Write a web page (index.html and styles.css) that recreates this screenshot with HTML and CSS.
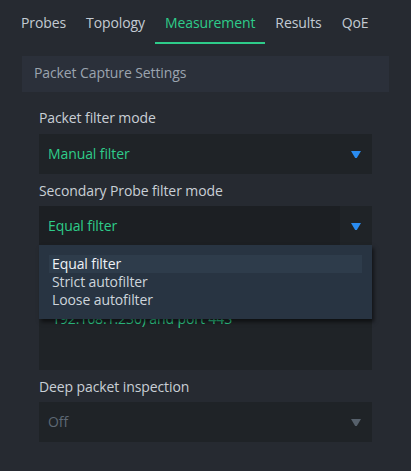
FILE: index.html
```html
<!DOCTYPE html>
<html>
<head>
<meta charset="utf-8">
<link rel="stylesheet" href="styles.css">
</head>
<body>
<nav class="tabs">
  <div class="tab">Probes</div>
  <div class="tab">Topology</div>
  <div class="tab active">Measurement</div>
  <div class="tab">Results</div>
  <div class="tab">QoE</div>
</nav>
<section class="panel">
  <div class="panel-head">Packet Capture Settings</div>
  <div class="panel-body">
    <div class="field">
      <div class="label">Packet filter mode</div>
      <div class="select">
        <span class="value">Manual filter</span>
        <span class="arrow"><svg width="10" height="7" viewBox="0 0 10 7"><polygon points="0,0 10,0 5.8,7 4.2,7" fill="#2a8cf0"/></svg></span>
      </div>
    </div>
    <div class="field">
      <div class="label">Secondary Probe filter mode</div>
      <div class="select-wrap">
        <div class="select open">
          <span class="value input">Equal filter</span>
          <span class="arrow"><svg width="10" height="7" viewBox="0 0 10 7"><polygon points="0,0 10,0 5.8,7 4.2,7" fill="#2a8cf0"/></svg></span>
        </div>
        <ul class="menu">
          <li class="item selected">Equal filter</li>
          <li class="item">Strict autofilter</li>
          <li class="item">Loose autofilter</li>
        </ul>
      </div>
    </div>
    <div class="field field-filter">
      <div class="textarea">192.168.1.230) and port 443</div>
    </div>
    <div class="field">
      <div class="label">Deep packet inspection</div>
      <div class="select disabled">
        <span class="value">Off</span>
        <span class="arrow"><svg width="10" height="7" viewBox="0 0 10 7"><polygon points="0,0 10,0 5.8,7 4.2,7" fill="#56606b"/></svg></span>
      </div>
    </div>
  </div>
</section>
</body>
</html>
```

FILE: styles.css
```css
* { box-sizing: border-box; }
html, body { margin: 0; padding: 0; }
body {
  background: #262a31;
  font-family: "Open Sans", "Noto Sans", sans-serif;
  font-size: 14px;
  line-height: 20px;
  letter-spacing: -0.1px;
  color: #c6ccd4;
  width: 411px;
  height: 471px;
  overflow: hidden;
}
.tabs {
  display: flex;
  padding-left: 11px;
}
.tab {
  padding: 13px 10px 9px;
  border-bottom: 2px solid transparent;
  color: #c3cad3;
}
.tab.active {
  color: #2ecc8a;
  border-bottom-color: #2ecc8a;
}
.panel {
  margin: 12px 22px 0;
}
.panel-head {
  background: #2b303a;
  color: #9ba4af;
  padding: 7px 12px 9px;
  height: 36px;
}
.panel-body {
  padding: 9px 17px 0;
}
.field {
  margin-top: 7px;
}
.label {
  color: #c9cfd6;
  margin-bottom: 5px;
}
.field:first-child .label { margin-bottom: 6px; }
.select {
  display: flex;
  height: 40px;
  background: #1f2327;
  align-items: stretch;
}
.select .value {
  flex: 1;
  padding-left: 9px;
  line-height: 40px;
  color: #2ecc8a;
}
.select .value.input {
  background: #1c1f23;
}
.select .arrow {
  width: 32px;
  display: flex;
  align-items: center;
  justify-content: center;
  padding-top: 1px;
}
.select.disabled .value { color: #5d6874; }
.select-wrap {
  position: relative;
}
.menu {
  position: absolute;
  left: 0;
  right: 0;
  top: 39px;
  margin: 0;
  padding: 10px;
  list-style: none;
  background: #283442;
  box-shadow: 2px 3px 4px rgba(0, 0, 0, 0.55);
  z-index: 2;
}
.item {
  line-height: 18px;
  height: 18px;
  padding-left: 3px;
  color: #cdd4dc;
}
.item.selected {
  background: #2e3c4b;
  color: #eef2f6;
}
.field-filter {
  margin-top: 0;
}
.textarea {
  height: 124px;
  background: #1f2327;
  color: #2ecc8a;
  padding: 64px 13px 0;
  line-height: 18px;
}
```
